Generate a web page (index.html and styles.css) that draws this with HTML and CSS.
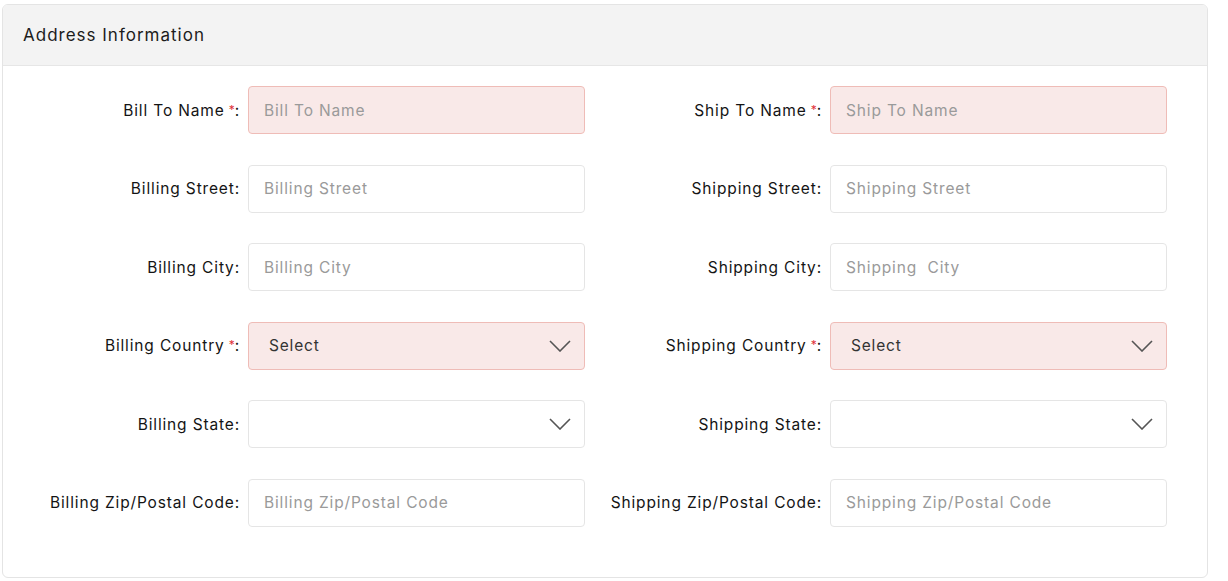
FILE: index.html
```html
<!DOCTYPE html>
<html>
<head>
<meta charset="utf-8">
<link rel="stylesheet" href="styles.css">
</head>
<body>
<div class="card">
  <div class="card-header">Address Information</div>
  <div class="card-body">
    <div class="col">
      <div class="row"><label class="lbl">Bill To Name<span class="req">*</span>:</label><input class="field required" placeholder="Bill To Name"></div>
      <div class="row"><label class="lbl">Billing Street:</label><input class="field" placeholder="Billing Street"></div>
      <div class="row"><label class="lbl">Billing City:</label><input class="field" placeholder="Billing City"></div>
      <div class="row"><label class="lbl">Billing Country<span class="req">*</span>:</label><div class="select required"><span class="sel-text">Select</span><svg class="chev" width="22" height="12" viewBox="0 0 22 12"><path d="M1 1 L11 11 L21 1" fill="none" stroke="#555" stroke-width="1.6"/></svg></div></div>
      <div class="row"><label class="lbl">Billing State:</label><div class="select"><span class="sel-text"></span><svg class="chev" width="22" height="12" viewBox="0 0 22 12"><path d="M1 1 L11 11 L21 1" fill="none" stroke="#555" stroke-width="1.6"/></svg></div></div>
      <div class="row"><label class="lbl">Billing Zip/Postal Code:</label><input class="field" placeholder="Billing Zip/Postal Code"></div>
    </div>
    <div class="col">
      <div class="row"><label class="lbl">Ship To Name<span class="req">*</span>:</label><input class="field required" placeholder="Ship To Name"></div>
      <div class="row"><label class="lbl">Shipping Street:</label><input class="field" placeholder="Shipping Street"></div>
      <div class="row"><label class="lbl">Shipping City:</label><input class="field" placeholder="Shipping  City"></div>
      <div class="row"><label class="lbl">Shipping Country<span class="req">*</span>:</label><div class="select required"><span class="sel-text">Select</span><svg class="chev" width="22" height="12" viewBox="0 0 22 12"><path d="M1 1 L11 11 L21 1" fill="none" stroke="#555" stroke-width="1.6"/></svg></div></div>
      <div class="row"><label class="lbl">Shipping State:</label><div class="select"><span class="sel-text"></span><svg class="chev" width="22" height="12" viewBox="0 0 22 12"><path d="M1 1 L11 11 L21 1" fill="none" stroke="#555" stroke-width="1.6"/></svg></div></div>
      <div class="row"><label class="lbl">Shipping Zip/Postal Code:</label><input class="field" placeholder="Shipping Zip/Postal Code"></div>
    </div>
  </div>
</div>
</body>
</html>
```
FILE: styles.css
```css
html, body {
  margin: 0;
  padding: 0;
  background: #ffffff;
}
body {
  padding: 4px 20px 3px 2px;
  font-family: Inter, "Open Sans", sans-serif;
  color: #222;
}
.card {
  width: 1204px;
  border: 1px solid #e4e4e4;
  border-radius: 6px;
  background: #fff;
  overflow: hidden;
}
.card-header {
  height: 61px;
  box-sizing: border-box;
  padding: 0 20px;
  display: flex;
  align-items: center;
  background: #f3f3f3;
  border-bottom: 1px solid #e6e6e6;
  font-size: 17px;
  font-weight: 400;
  letter-spacing: 1px;
  color: #1c1c1c;
}
.card-body {
  display: grid;
  grid-template-columns: 582px 582px;
  padding: 20px 0 50px 0;
}
.col {
  display: flex;
  flex-direction: column;
  gap: 30.5px;
}
.row {
  display: grid;
  grid-template-columns: 237px 337px;
  column-gap: 8px;
  align-items: center;
}
.lbl {
  text-align: right;
  font-size: 15.5px;
  font-weight: 400;
  letter-spacing: 0.85px;
  color: #141414;
  white-space: nowrap;
}
.req {
  color: #e0303a;
  font-size: 12px;
  margin-left: 4px;
  margin-right: 0;
  letter-spacing: 0;
  vertical-align: 2px;
}
.field, .select {
  height: 48px;
  box-sizing: border-box;
  border: 1px solid #e5e5e5;
  border-radius: 4px;
  background: #fff;
  font-family: Inter, "Open Sans", sans-serif;
  font-size: 15.5px;
  letter-spacing: 0.85px;
  padding: 0 15px;
  color: #333;
  outline: none;
  width: 337px;
  margin: 0;
}
.field::placeholder {
  color: #9a9a9a;
}
.required {
  background: #f9e9e8;
  border-color: #efbcb7;
}
.select {
  display: flex;
  align-items: center;
  justify-content: space-between;
  padding: 0 13px 0 20px;
}
.sel-text {
  font-size: 15.5px;
  letter-spacing: 0.8px;
  color: #333;
}
.chev {
  display: block;
}
```
